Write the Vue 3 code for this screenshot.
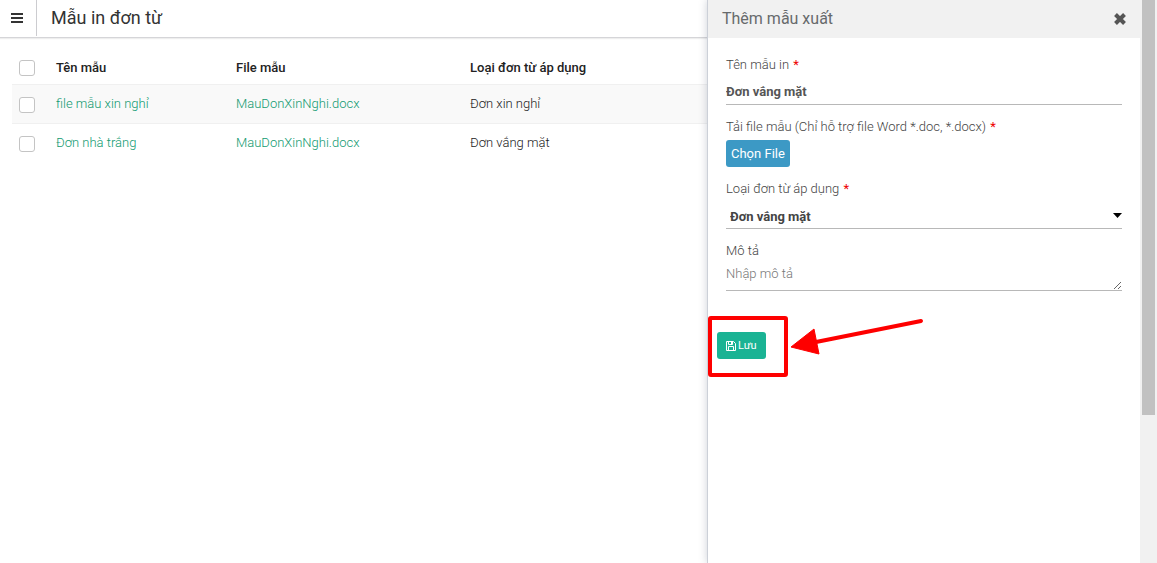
<template>
  <div class="page">
    <main class="page__main">
      <header class="topbar">
        <button class="topbar__menu" type="button" aria-label="Menu">
          <svg width="12" height="12" viewBox="0 0 12 12" fill="none" stroke="#333" stroke-width="2">
            <path d="M0 2h12M0 6h12M0 10h12" />
          </svg>
        </button>
        <h1 class="topbar__title">Mẫu in đơn từ</h1>
      </header>

      <div class="list">
        <table class="list__table">
          <colgroup>
            <col class="col-check" />
            <col class="col-name" />
            <col class="col-file" />
            <col />
          </colgroup>
          <thead>
            <tr>
              <th><input v-model="allChecked" type="checkbox" aria-label="Chọn tất cả" /></th>
              <th>Tên mẫu</th>
              <th>File mẫu</th>
              <th>Loại đơn từ áp dụng</th>
            </tr>
          </thead>
          <tbody>
            <tr v-for="row in rows" :key="row.name">
              <td><input v-model="row.checked" type="checkbox" :aria-label="row.name" /></td>
              <td><a href="#">{{ row.name }}</a></td>
              <td><a href="#">{{ row.file }}</a></td>
              <td>{{ row.type }}</td>
            </tr>
          </tbody>
        </table>
      </div>
    </main>

    <aside class="drawer">
      <div class="drawer__header">
        <h2>Thêm mẫu xuất</h2>
        <button class="drawer__close" type="button" aria-label="Đóng">
          <svg width="12" height="12" viewBox="0 0 12 12" fill="none" stroke="#555" stroke-width="4">
            <path d="M1.500 1.500l9 9M10.500 1.500l-9 9" />
          </svg>
        </button>
      </div>

      <form class="drawer__form" @submit.prevent>
        <div class="field">
          <label for="template-name">Tên mẫu in <span class="required">*</span></label>
          <input id="template-name" v-model="form.name" class="control control--bold" type="text" />
        </div>

        <div class="field">
          <label for="template-file">Tải file mẫu (Chỉ hỗ trợ file Word *.doc, *.docx) <span class="required">*</span></label>
          <button id="template-file" class="btn btn--file" type="button">Chọn File</button>
        </div>

        <div class="field">
          <label for="template-type">Loại đơn từ áp dụng <span class="required">*</span></label>
          <div class="select">
            <select id="template-type" v-model="form.type" class="control control--select">
              <option v-for="type in types" :key="type">{{ type }}</option>
            </select>
            <svg class="select__caret" width="9" height="5" viewBox="0 0 9 5">
              <path d="M0 0h9L4.500 5z" fill="#000" />
            </svg>
          </div>
        </div>

        <div class="field">
          <label for="template-desc">Mô tả</label>
          <textarea id="template-desc" v-model="form.description" class="control" rows="1" placeholder="Nhập mô tả"></textarea>
        </div>

        <div class="actions">
          <button class="btn btn--save" type="submit">
            <svg width="10" height="10" viewBox="0 0 10 10" fill="none" stroke="#fff">
              <path d="M.5.5h7l2 2v7h-9zM2.500.5v3h4v-3M2.500 9.500v-4h5v4M5.500 1v2" />
            </svg>
            Lưu
          </button>
          <div class="actions__frame"></div>
          <svg class="actions__arrow" width="134" height="40" viewBox="0 0 134 40">
            <path d="M26 25L131 4" stroke="#fe0000" stroke-width="4" stroke-linecap="round" />
            <path d="M1 30L24 12l5 25z" fill="#fe0000" stroke="#fe0000" stroke-linejoin="round" />
          </svg>
        </div>
      </form>
    </aside>

    <div class="scrollbar">
      <div class="scrollbar__thumb"></div>
    </div>
  </div>
</template>

<script setup>
import { computed, reactive } from 'vue'

const rows = reactive([
  { name: 'file mẫu xin nghỉ', file: 'MauDonXinNghi.docx', type: 'Đơn xin nghỉ', checked: false },
  { name: 'Đơn nhà trắng', file: 'MauDonXinNghi.docx', type: 'Đơn vắng mặt', checked: false }
])

const types = ['Đơn vắng mặt', 'Đơn xin nghỉ']

const form = reactive({
  name: 'Đơn vắng mặt',
  type: 'Đơn vắng mặt',
  description: ''
})

const allChecked = computed({
  get: () => rows.every((row) => row.checked),
  set: (value) => rows.forEach((row) => { row.checked = value })
})
</script>

<style>
body {
  background: #fff;
}
</style>

<style scoped>
* {
  box-sizing: border-box;
}

.page {
  display: flex;
  min-height: 100vh;
  overflow: hidden;
  font-family: Roboto, "Liberation Sans", sans-serif;
  font-size: 13px;
  font-weight: 300;
  line-height: 20px;
  color: #222;
}

button,
input,
select,
textarea {
  font: inherit;
}

button {
  padding: 0;
  border: 0;
  background: none;
  cursor: pointer;
}

.page__main {
  flex: 1;
  min-width: 0;
}

.topbar {
  display: flex;
  height: 38px;
  border-bottom: 1px solid #d5d5d8;
  box-shadow: 0 1px 1px #eee;
}

.topbar__menu {
  display: flex;
  align-items: center;
  justify-content: center;
  width: 37px;
  height: 36px;
  padding-right: 2px;
  border-right: 1px solid #ccccd0;
}

.topbar__title {
  margin: 0;
  padding-left: 14px;
  font-size: 18px;
  font-weight: 400;
  line-height: 36px;
  color: #333;
}

.list {
  padding: 14px 0 0 12px;
}

.list__table {
  width: 100%;
  border-collapse: collapse;
  table-layout: fixed;
}

.col-check {
  width: 44px;
}

.col-name {
  width: 180px;
}

.col-file {
  width: 234px;
}

.list__table th,
.list__table td {
  height: 39px;
  padding: 0;
  text-align: left;
}

.list__table th {
  height: 32px;
  padding-top: 1px;
  font-weight: 500;
}

.list__table tbody tr:first-child {
  border-top: 1px solid #f0f0f0;
  border-bottom: 1px solid #f0f0f0;
  background: #f9f9f9;
}

.list__table a {
  color: #109a70;
  text-decoration: none;
}

.list__table input {
  display: block;
  width: 16px;
  height: 16px;
  margin: 0 0 0 7px;
  border: 1px solid #c4c4c4;
  border-radius: 3px;
  background: #fff;
  appearance: none;
}

.list__table td input {
  margin-top: 2px;
}

.list__table input:checked {
  background: #1ab394;
}

.drawer {
  position: relative;
  width: 433px;
  border-left: 1px solid #ccd0d8;
  background: #fff;
  box-shadow: 0 0 8px rgba(60, 70, 100, 0.25);
  color: #444;
}

.drawer__header {
  display: flex;
  align-items: center;
  justify-content: space-between;
  height: 38px;
  padding: 0 14px;
  background: #f1f1f1;
}

.drawer__header h2 {
  margin: 0;
  font-size: 16px;
  font-weight: 400;
  color: #676a6c;
}

.drawer__close {
  display: flex;
}

.drawer__form {
  display: flex;
  flex-direction: column;
  gap: 12px;
  padding: 17px 18px;
}

.field {
  display: flex;
  flex-direction: column;
  align-items: flex-start;
  gap: 3px;
}

.required {
  margin-left: 1px;
  font-weight: 400;
  color: #e00;
}

.control {
  display: block;
  width: 100%;
  height: 27px;
  padding: 0;
  border: 0;
  border-bottom: 1px solid #b8b8b8;
  border-radius: 0;
  outline: 0;
  background: transparent;
  color: #555;
}

.control::placeholder {
  color: #777;
}

.control--bold {
  font-weight: 700;
}

.control--select {
  padding: 3px 16px 0 4px;
  font-weight: 700;
  color: #444;
  appearance: none;
}

.select {
  position: relative;
  width: 100%;
}

.select__caret {
  position: absolute;
  top: 11px;
  right: 0;
  pointer-events: none;
}

.btn {
  height: 27px;
  border-radius: 3px;
  font-weight: 400;
  color: #fff;
}

.btn--file {
  padding: 0 5px;
  background: #3c99c5;
}

.btn--save {
  display: flex;
  align-items: center;
  gap: 2px;
  padding: 0 9px;
  background: #1ab394;
  font-size: 11px;
}

.actions {
  position: relative;
  margin: 29px -9px 0;
}

/* highlight around the save button, with its pointer */
.actions__frame {
  position: absolute;
  top: -16px;
  left: -9px;
  width: 80px;
  height: 61px;
  border: 4px solid #fe0000;
  border-radius: 3px;
  pointer-events: none;
}

.actions__arrow {
  position: absolute;
  top: -15px;
  left: 73px;
  pointer-events: none;
}

.scrollbar {
  position: relative;
  width: 17px;
  padding: 0 2px;
  background: #f1f1f1;
}

.scrollbar__thumb {
  height: 415px;
  background: #c1c1c1;
}
</style>
